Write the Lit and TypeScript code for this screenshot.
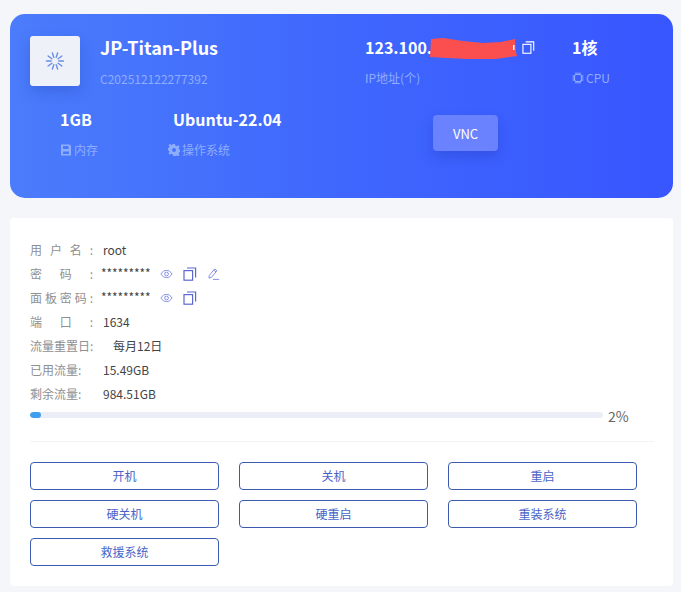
import { LitElement, html, css, svg } from "lit";
import { customElement } from "lit/decorators.js";

const copyIcon = (cls: string) => html`<svg class=${cls} viewBox="0 0 14 14" fill="none" stroke="currentColor" stroke-width="1.200"><rect x="1" y="3.600" width="8.600" height="9.600"/><path d="M4 1h8.600v9.600"/></svg>`;
const eyeIcon = html`<svg class="ico eye" viewBox="0 0 14 14" fill="none" stroke="currentColor" stroke-width="1"><path d="M1 7c1.600-2.600 3.600-3.900 6-3.900s4.400 1.300 6 3.900c-1.600 2.600-3.600 3.900-6 3.900S2.600 9.600 1 7z"/><circle cx="7" cy="7" r="2"/></svg>`;
const editIcon = html`<svg class="ico eye" viewBox="0 0 14 14" fill="none" stroke="currentColor" stroke-width="1"><path d="M2.500 8.500 8.300 1.500l2.400 2-5.800 7-2.800.9z"/><path d="M7.300 2.800l2.400 2"/><path d="M6.500 12.800h6.500"/></svg>`;
const spokes = Array.from({ length: 10 }, (_, i) => i * 36).map(
  (a) => svg`<line x1="10" y1="1.500" x2="10" y2="6.200" transform="rotate(${a + 18} 10 10)"/>`
);

@customElement("app-root")
export class AppRoot extends LitElement {
  static styles = css`
    :host {
      display: block;
      width: 681px;
      height: 592px;
      box-sizing: border-box;
      padding: 14px 8px 6px 10px;
      background: #f4f6f9;
      font-family: "Noto Sans CJK SC", "Noto Sans", sans-serif;
      overflow: hidden;
    }
    .hero {
      height: 184px;
      box-sizing: border-box;
      border-radius: 15px;
      background: linear-gradient(90deg, #4b7cfb 0%, #3f67fd 50%, #3856ff 100%);
      padding: 22px 0 0 20px;
      color: #fff;
      display: grid;
      grid-template-columns: 335px 207px 1fr;
      grid-template-rows: 72px 1fr;
    }
    .brand { display: flex; gap: 20px; }
    .logo {
      width: 50px;
      height: 50px;
      border-radius: 3px;
      background: #eef1f8;
      box-shadow: 0 6px 14px rgba(30, 60, 170, 0.28);
      display: flex;
      align-items: center;
      justify-content: center;
    }
    .logo svg { width: 20px; height: 20px; stroke: #6a8de6; stroke-width: 1.400; stroke-linecap: round; }
    .val {
      margin-top: -1px;
      font-size: 16px;
      font-weight: 700;
      line-height: 24px;
      height: 24px;
      white-space: nowrap;
    }
    .val.name { font-size: 18px; }
    .sub {
      margin-top: 10px;
      font-size: 12px;
      line-height: 17px;
      color: #8fadfd;
      white-space: nowrap;
      display: flex;
      align-items: center;
      gap: 2px;
    }
    .sub.id { margin-top: 11px; }
    .sub svg { width: 12px; height: 12px; flex: none; }
    .ip { position: relative; display: flex; align-items: center; gap: 6px; }
    .ip-text { width: 151px; }
    .ip .copy { width: 13px; height: 13px; color: #fff; }
    .scribble { position: absolute; left: 65px; top: 2px; width: 88px; height: 22px; }
    .row2 { grid-column: 1 / 3; display: flex; align-items: flex-start; padding: 0 0 0 30px; }
    .mem { width: 108px; }
    .os { width: 265px; }
    .os .val { margin-left: 5px; }
    .vnc {
      width: 65px;
      height: 36px;
      margin-top: 7px;
      border: 0;
      border-radius: 4px;
      padding: 0;
      background: #6a82fd;
      color: #fff;
      font: 13px "Noto Sans CJK SC", sans-serif;
      box-shadow: 0 6px 12px rgba(30, 50, 170, 0.28);
    }
    .panel {
      margin-top: 20px;
      height: 368px;
      box-sizing: border-box;
      background: #fff;
      border-radius: 4px;
      padding: 20px 20px 0;
    }
    .info { display: flex; align-items: center; height: 24px; font-size: 12px; color: #444; white-space: nowrap; }
    .info.first { height: 23px; }
    .lab { color: #8f8f8f; }
    .just { width: 63px; margin-right: 10px; display: flex; justify-content: space-between; }
    .stars { margin-left: -2px; width: 59px; letter-spacing: -0.1px; position: relative; top: -1px; }
    .ico { width: 14px; height: 14px; color: #5a68d4; margin-right: 10px; flex: none; position: relative; top: 1px; }
    .ico.eye { color: #7d88e0; width: 13px; }
    .wide { width: 83px; }
    .mid { width: 73px; }
    .bar { display: flex; align-items: center; height: 20px; }
    .track { width: 573px; height: 6px; border-radius: 3px; background: #ebedf7; overflow: hidden; }
    .fill { height: 100%; border-radius: 3px; background: #409eef; }
    .pct { margin-left: 5px; font-size: 14px; color: #666; position: relative; top: 1px; }
    hr { border: 0; border-top: 1px solid #f2f3f6; margin: 16px 0 20px; width: 624px; }
    .btns { display: grid; grid-template-columns: repeat(3, 189px); gap: 10px 20px; }
    .btn {
      height: 28px;
      box-sizing: border-box;
      border: 1px solid #3b5ab0;
      border-radius: 4px;
      background: #fff;
      color: #4863c8;
      font: 12px "Noto Sans CJK SC", sans-serif;
      padding: 0 0 1px;
    }
  `;

  render() {
    const just = (s: string) => html`<span class="lab just">${[...s].map((c) => html`<span>${c}</span>`)}</span>`;
    return html`
      <section class="hero">
        <div class="brand">
          <div class="logo"><svg viewBox="0 0 20 20">${spokes}</svg></div>
          <div>
            <div class="val name">JP-Titan-Plus</div>
            <div class="sub id">C202512122277392</div>
          </div>
        </div>
        <div>
          <div class="val ip">
            <span class="ip-text">123.100.</span>
            ${copyIcon("copy")}
            <svg class="scribble" viewBox="0 0 88 22"><path fill="#fb4f4f" d="M1 2l12-1 20 3 20 2 18-1 14-3 1 13 1 4-14 2-16 2-20-1-20-1-17-1z"/><rect x="83" y="8" width="1.500" height="5" fill="#fff"/></svg>
          </div>
          <div class="sub">IP地址(个)</div>
        </div>
        <div>
          <div class="val">1核</div>
          <div class="sub">
            <svg viewBox="0 0 12 12" fill="none" stroke="currentColor" stroke-width="1.200"><rect x="2.500" y="2.500" width="7" height="7" rx="2"/><path d="M4 .5v2M6 .5v2M8 .5v2M4 9.500v2M6 9.500v2M8 9.500v2M.5 4h2M.5 6h2M.5 8h2M9.500 4h2M9.500 6h2M9.500 8h2"/></svg>
            CPU
          </div>
        </div>
        <div class="row2">
          <div class="mem">
            <div class="val">1GB</div>
            <div class="sub">
              <svg viewBox="0 0 12 12" fill="currentColor" fill-rule="evenodd"><path d="M1 .5h8.500L11 2v9.500H1zM3 2v3h5.500V2zM3 7.500V10h6V7.500z"/></svg>
              内存
            </div>
          </div>
          <div class="os">
            <div class="val">Ubuntu-22.04</div>
            <div class="sub">
              <svg viewBox="0 0 12 12"><path fill="currentColor" fill-rule="evenodd" d="M5 0h2l.4 1.700 1.200.5L10.100 1.300l1.400 1.400-.9 1.500.5 1.200 1.700.4v2l-1.700.4-.5 1.200.9 1.500-1.400 1.400-1.500-.9-1.200.5L7 12H5l-.4-1.700-1.200-.5-1.500.9L.5 9.300l.9-1.500-.5-1.200L-.8 6.200v-2l1.700-.4.5-1.200-.9-1.500L1.900 0l1.500.9 1.200-.5zM6 4a2 2 0 1 0 0 4 2 2 0 0 0 0-4z"/></svg>
              操作系统
            </div>
          </div>
          <div><button class="vnc">VNC</button></div>
        </div>
      </section>

      <section class="panel">
        <div class="info first">${just("用户名:")}<span>root</span></div>
        <div class="info">${just("密码:")}<span class="stars">*********</span>${eyeIcon}${copyIcon("ico")}${editIcon}</div>
        <div class="info">${just("面板密码:")}<span class="stars">*********</span>${eyeIcon}${copyIcon("ico")}</div>
        <div class="info">${just("端口:")}<span>1634</span></div>
        <div class="info"><span class="lab wide">流量重置日:</span><span>每月12日</span></div>
        <div class="info"><span class="lab mid">已用流量:</span><span>15.49GB</span></div>
        <div class="info"><span class="lab mid">剩余流量:</span><span>984.51GB</span></div>
        <div class="bar">
          <div class="track"><div class="fill" style="width:2%"></div></div>
          <span class="pct">2%</span>
        </div>
        <hr />
        <div class="btns">
          ${["开机", "关机", "重启", "硬关机", "硬重启", "重装系统", "救援系统"].map(
            (t) => html`<button class="btn">${t}</button>`
          )}
        </div>
      </section>
    `;
  }
}
